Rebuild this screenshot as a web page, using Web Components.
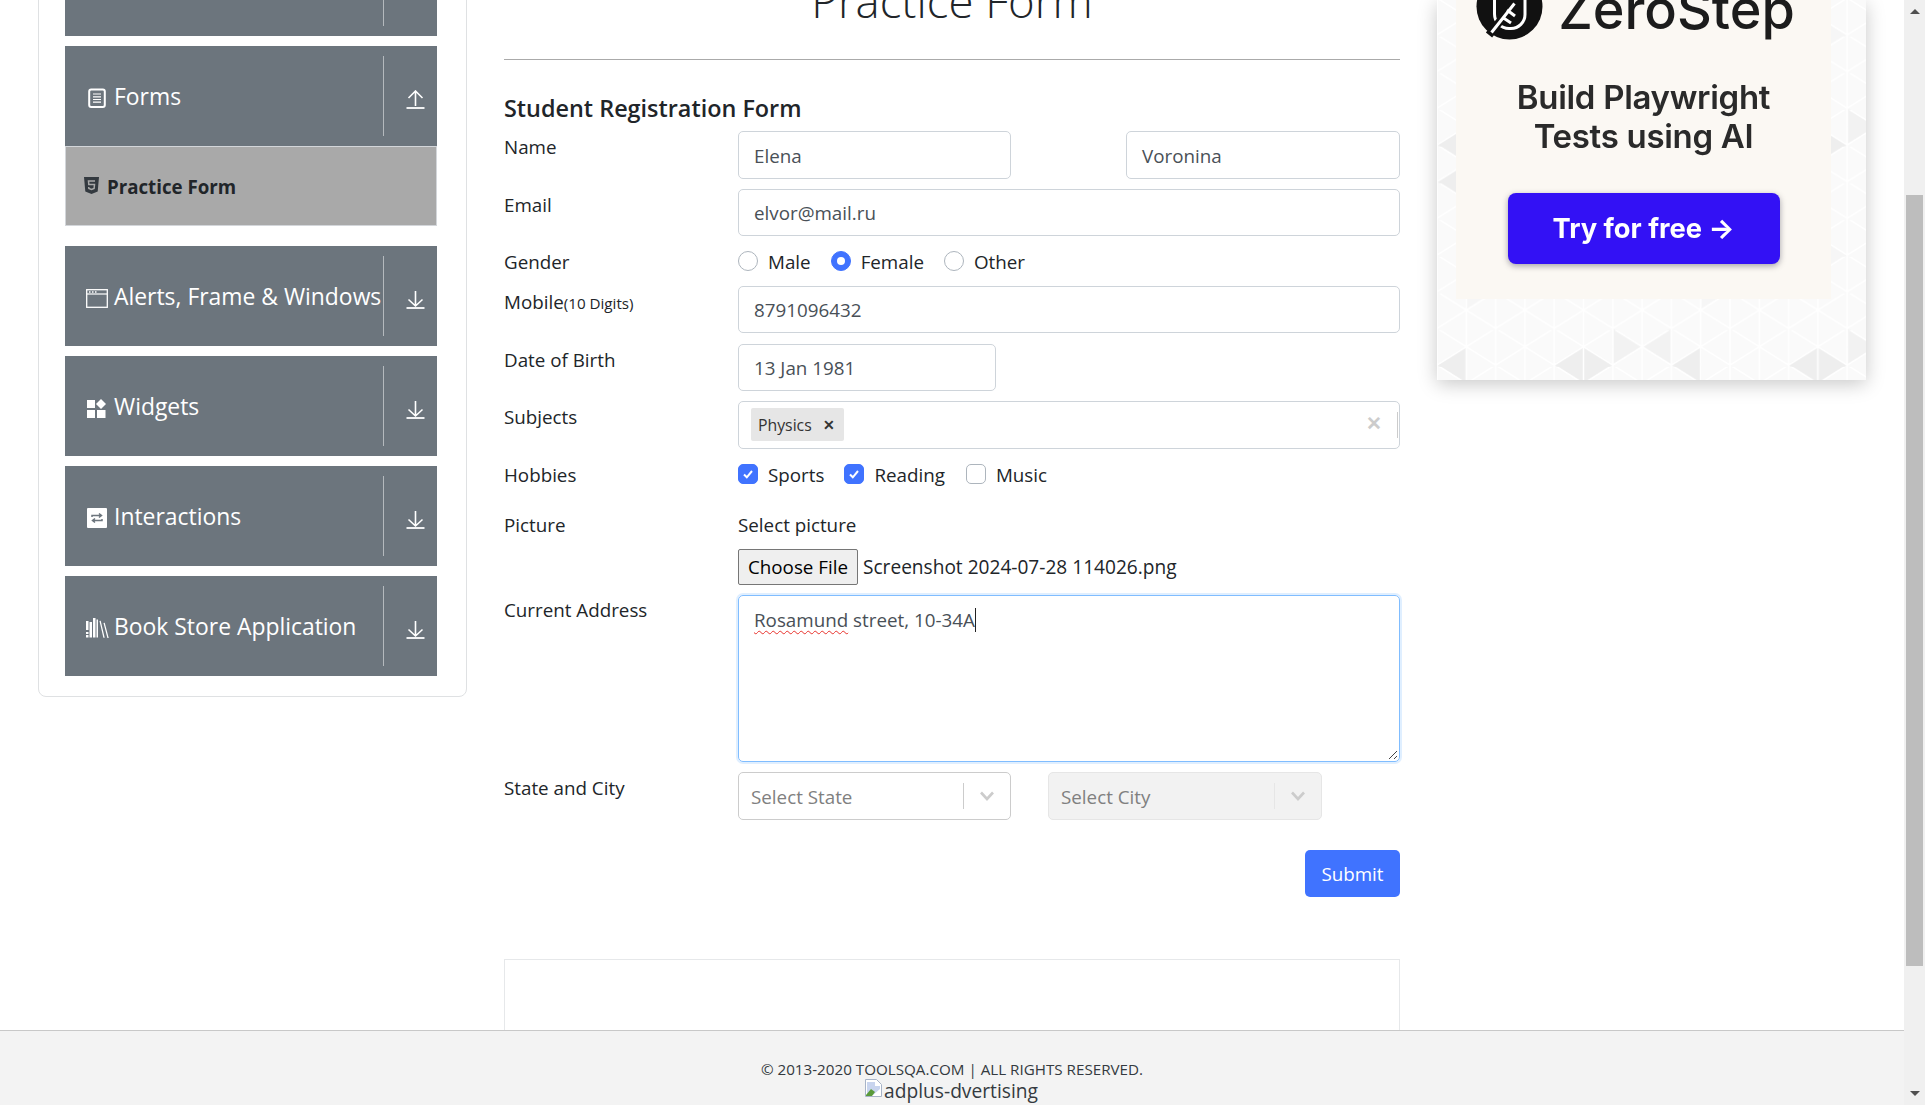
<!DOCTYPE html>
<html>
<head>
<meta charset="utf-8">
<title>Practice Form</title>
<style>
html, body { margin: 0; padding: 0; height: 1105px; overflow: hidden; background: #fff; }
body { font-family: "Open Sans", "Liberation Sans", sans-serif; font-size: 18.8px; color: #212529; }
</style>
</head>
<body>
<practice-page>
    <side-menu slot="side">
        <menu-group icon="none"></menu-group>
        <menu-group icon="forms" open>Forms</menu-group>
        <menu-entry>Practice Form</menu-entry>
        <menu-group icon="window" style="margin-top:20px">Alerts, Frame &amp; Windows</menu-group>
        <menu-group icon="widgets">Widgets</menu-group>
        <menu-group icon="swap">Interactions</menu-group>
        <menu-group icon="books">Book Store Application</menu-group>
    </side-menu>
    <practice-form slot="main"></practice-form>
    <ad-banner slot="ad"></ad-banner>
    <site-footer slot="footer"></site-footer>
    <page-scrollbar slot="bar"></page-scrollbar>
</practice-page>

<script>
const ICONS = {
    none: ``,
    forms: `<svg width="18" height="20" viewBox="0 0 18 20" fill="none" stroke="#fff"><rect x="1.2" y="1.5" width="15.6" height="17.5" rx="2" stroke-width="2"/><path d="M5 6h8M5 8.8h8M5 11.5h8M5 14.2h8" stroke-width="1.2"/></svg>`,
    window: `<svg width="22" height="19" viewBox="0 0 22 19" fill="none" stroke="#fff"><rect x=".7" y=".7" width="20.6" height="17.6" stroke-width="1.3"/><path d="M1 5h20" stroke-width="1.2"/><path d="M3 3h1.5M6 3h1.5M9 3h1.5" stroke-width="1.4"/></svg>`,
    widgets: `<svg width="20" height="19" viewBox="0 0 20 19" fill="#fff"><rect x="0" y="1" width="8" height="8"/><rect x="0" y="11" width="8" height="8"/><rect x="10" y="11" width="8.5" height="8"/><path d="M14 0l5 5-5 5-5-5z"/></svg>`,
    swap: `<svg width="20" height="20" viewBox="0 0 20 20"><rect width="20" height="20" rx="1" fill="#fff"/><path d="M5 9V7.5h9M12 5.5l2.5 2-2.500 2M15 11v1.500H6M8 10.500l-2.500 2 2.500 2" fill="none" stroke="#6c757d" stroke-width="1.5"/></svg>`,
    books: `<svg width="23" height="20" viewBox="0 0 23 20" fill="#fff"><path d="M0 3h2.500v9H0zM0 14h2.500v2H0zM0 17h2.500v2.500H0zM3.500 4H6v15.500H3.500zM7 0h2.500v19.500H7zM10.500 1.500h1.500v18h-1.500z"/><path d="M13.500 3l1.200-.3 4 17h-1.300zM17.500 5l1.200-.3 4 15.300h-1.300z"/></svg>`
};

class MenuGroup extends HTMLElement {
    constructor() {
        super();
        this.shadowDOM = this.attachShadow({mode: "open"});
    }
    connectedCallback() {
        const up = this.hasAttribute("open");
        this.shadowDOM.innerHTML = `
        <style>
        :host { display: flex; height: 100px; margin-bottom: 10px; background: #6c757d; color: #fff; box-sizing: border-box; padding-left: 20px; align-items: center; font-size: 22.9px; flex: none; }
        .icon { width: 24px; height: 24px; margin-top: 4px; margin-right: 5px; display: flex; align-items: center; justify-content: center; flex: none; }
        .title { flex: 1; white-space: nowrap; min-width: 0; }
        .arrow { width: 54px; height: 80px; border-left: 1px solid #b4b9bd; box-sizing: border-box; padding-left: 22px; display: flex; align-items: center; flex: none; }
        .arrow svg { margin-top: 7px; }
        </style>
        <span class="icon">${ICONS[this.getAttribute("icon")]}</span>
        <span class="title"><slot></slot></span>
        <span class="arrow">
            <svg width="19" height="19" viewBox="0 0 19 19" fill="none" stroke="#fff" stroke-width="1.6">
            ${up ? `<path d="M9.500 16V1.500M2.500 8l7-7 7 7"/>` : `<path d="M9.500 1v15M2.500 9.500l7 6.500 7-6.500"/>`}
            <path d="M.5 18h18" stroke-width="1.800"/></svg>
        </span>`;
    }
}

class MenuEntry extends HTMLElement {
    constructor() {
        super();
        this.shadowDOM = this.attachShadow({mode: "open"});
    }
    connectedCallback() {
        this.shadowDOM.innerHTML = `
        <style>
        :host { display: flex; height: 80px; background: #a9a9a9; border: 1px solid #d3d6da; box-sizing: border-box; padding-left: 18px; align-items: center; font-size: 18.7px; font-weight: 700; color: #212529; margin-top: -10px; flex: none; }
        svg { margin-right: 8px; margin-top: -2px; }
        </style>
        <svg width="15" height="17" viewBox="0 0 15 17"><path fill="#343a40" d="M0 0h15l-1.300 14.500L7.500 17l-6.200-2.500z"/><path fill="none" stroke="#a9a9a9" stroke-width="1.500" d="M11 4H4.500l.3 3.500H10.500l-.4 4-2.600 1-2.600-1-.2-1.500"/></svg>
        <slot></slot>`;
    }
}

class SideMenu extends HTMLElement {
    constructor() {
        super();
        this.shadowDOM = this.attachShadow({mode: "open"});
    }
    connectedCallback() {
        this.shadowDOM.innerHTML = `
        <style>
        :host { display: flex; flex-direction: column; width: 429px; height: 797px; margin-top: -100px; box-sizing: border-box; border: 1px solid #dfe1e3; border-radius: 8px; padding: 35px 29px 0 26px; flex: none; }
        </style>
        <slot></slot>`;
    }
}

class TextField extends HTMLElement {
    constructor() {
        super();
        this.shadowDOM = this.attachShadow({mode: "open"});
    }
    connectedCallback() {
        this.shadowDOM.innerHTML = `
        <style>
        :host { display: flex; align-items: center; box-sizing: border-box; height: 100%; border: 1px solid #ced4da; border-radius: 5px; padding: 1px 15px 0; color: #495057; background: #fff; white-space: nowrap; }
        </style>
        <slot></slot>`;
    }
}

class ChoiceBox extends HTMLElement {
    constructor() {
        super();
        this.shadowDOM = this.attachShadow({mode: "open"});
    }
    connectedCallback() {
        const radio = this.getAttribute("type") == "radio";
        const on = this.hasAttribute("checked");
        const mark = !on ? "" : radio
            ? `<span class="dot"></span>`
            : `<svg width="12" height="12" viewBox="0 0 12 12" fill="none" stroke="#fff" stroke-width="2"><path d="M2 6.500l2.800 2.800L10 3"/></svg>`;
        this.shadowDOM.innerHTML = `
        <style>
        :host { display: flex; align-items: center; height: 20px; color: #212529; white-space: nowrap; }
        .box { width: 20px; height: 20px; box-sizing: border-box; border: 1px solid ${on ? "#4073ff" : "#adb5bd"}; background: ${on ? "#4073ff" : "#fff"}; border-radius: ${radio ? "50%" : "5px"}; display: flex; align-items: center; justify-content: center; margin-right: 10px; }
        .dot { width: 8px; height: 8px; border-radius: 50%; background: #fff; }
        .text { padding-top: 1px; }
        </style>
        <span class="box">${mark}</span><span class="text"><slot></slot></span>`;
    }
}

class SelectBox extends HTMLElement {
    constructor() {
        super();
        this.shadowDOM = this.attachShadow({mode: "open"});
    }
    connectedCallback() {
        const off = this.hasAttribute("disabled");
        this.shadowDOM.innerHTML = `
        <style>
        :host { display: flex; align-items: center; box-sizing: border-box; width: 273px; height: 100%; border: 1px solid ${off ? "#e6e6e6" : "#ccc"}; border-radius: 5px; background: ${off ? "#f2f2f2" : "#fff"}; color: #808080; padding-left: 12px; }
        .label { flex: 1; white-space: nowrap; padding-top: 1px; }
        .sep { width: 1px; height: 26px; background: ${off ? "#e6e6e6" : "#ccc"}; }
        .chev { width: 46px; display: flex; justify-content: center; }
        </style>
        <span class="label"><slot></slot></span><span class="sep"></span>
        <span class="chev"><svg width="16" height="12" viewBox="0 0 16 12" fill="none" stroke="#ccc" stroke-width="2.600"><path d="M2 2.500l6 6.500 6-6.500"/></svg></span>`;
    }
}

class FormRow extends HTMLElement {
    constructor() {
        super();
        this.shadowDOM = this.attachShadow({mode: "open"});
    }
    connectedCallback() {
        this.shadowDOM.innerHTML = `
        <style>
        :host { display: flex; flex: none; color: #212529; }
        .label { width: 234px; flex: none; padding-top: var(--lt, 4px); line-height: 24px; white-space: nowrap; box-sizing: border-box; padding-left: 1px; margin-left: -1px; }
        .control { flex: 1; min-width: 0; height: 100%; display: flex; gap: var(--cg, 0); justify-content: var(--cj, flex-start); margin-left: 1px; }
        ::slotted([slot=label]) { font-size: 15.200px; }
        </style>
        <div class="label"><slot name="title"></slot><slot name="label"></slot></div>
        <div class="control"><slot></slot></div>`;
    }
}

class PracticeForm extends HTMLElement {
    constructor() {
        super();
        this.shadowDOM = this.attachShadow({mode: "open"});
    }
    connectedCallback() {
        this.shadowDOM.innerHTML = `
        <style>
        :host { display: flex; flex-direction: column; width: 896px; margin-left: 37px; flex: none; height: 1200px; }
        h1 { margin: -40px 0 0; height: 100px; box-sizing: border-box; line-height: 80px; text-align: center; font-weight: 300; font-size: 45.500px; color: #212529; border-bottom: 1px solid #aaa; flex: none; }
        h5 { margin: 33px 0 0; height: 38px; line-height: 30px; font-size: 23.400px; font-weight: 600; flex: none; }
        .chip { display: inline-flex; align-items: center; height: 33px; width: 93px; box-sizing: border-box; background: #e6e6e6; border-radius: 2px; padding-left: 7px; font-size: 15.800px; color: #333; margin: 5px 0 0 -3px; white-space: nowrap; }
        .chip b { margin-left: 11px; font-size: 14px; font-weight: 700; }
        .clear { margin-left: auto; margin-right: 15px; color: #ccc; font-size: 19px; font-weight: 600; line-height: 1; }
        .tick { width: 1px; height: 26px; background: #ccc; }
        .file { display: flex; flex-direction: column; height: 100%; }
        .file .cap { height: 36px; line-height: 24px; }
        .file .pick { display: flex; align-items: center; white-space: nowrap; font-size: 19.100px; }
        .choose { width: 120px; height: 36px; box-sizing: border-box; border: 1px solid #767676; border-radius: 2px; background: #efefef; color: #000; display: flex; align-items: center; justify-content: center; margin-right: 5px; font-size: 18.800px; }
        .address { position: relative; height: 100%; box-sizing: border-box; border: 1px solid #80bdff; border-radius: 5px; box-shadow: 0 0 0 2px rgba(0,123,255,.12); padding: 12px 15px; color: #495057; line-height: 24px; }
        .address u { text-decoration: underline wavy #e8322c 1px; text-underline-offset: 3px; }
        .caret { display: inline-block; width: 1px; height: 24px; background: #222; vertical-align: -5px; }
        .grip { position: absolute; right: 1px; bottom: 1px; }
        .submit { width: 95px; height: 47px; border-radius: 5px; background: #4073ff; color: #fff; display: flex; align-items: center; justify-content: center; }
        .blank { height: 200px; margin-top: 62px; border: 1px solid #e6e8ea; flex: none; }
        </style>
        <h1>Practice Form</h1>
        <h5>Student Registration Form</h5>
        <form-row style="height:48px;--cj:space-between">
            <span slot="title">Name</span>
            <text-field style="width:273px">Elena</text-field>
            <text-field style="width:274px">Voronina</text-field>
        </form-row>
        <form-row style="height:47px;margin-top:10px;--lt:4px">
            <span slot="title">Email</span>
            <text-field style="width:100%">elvor@mail.ru</text-field>
        </form-row>
        <form-row style="height:20px;margin-top:15px;--lt:0;--cg:20px">
            <span slot="title" style="position:relative;top:-1px">Gender</span>
            <choice-box type="radio">Male</choice-box>
            <choice-box type="radio" checked>Female</choice-box>
            <choice-box type="radio">Other</choice-box>
        </form-row>
        <form-row style="height:47px;margin-top:15px;--lt:4px">
            <span slot="title">Mobile</span><span slot="label">(10 Digits)</span>
            <text-field style="width:100%">8791096432</text-field>
        </form-row>
        <form-row style="height:47px;margin-top:11px;--lt:4px">
            <span slot="title">Date of Birth</span>
            <text-field style="width:258px">13 Jan 1981</text-field>
        </form-row>
        <form-row style="height:48px;margin-top:10px;--lt:4px">
            <span slot="title">Subjects</span>
            <text-field style="width:100%;align-items:flex-start;padding-right:1px">
                <span class="chip">Physics<b>✕</b></span>
                <span class="clear" style="margin-top:11px">✕</span>
                <span class="tick" style="margin-top:9px"></span>
            </text-field>
        </form-row>
        <form-row style="height:20px;margin-top:15px;--lt:0;--cg:20px">
            <span slot="title" style="position:relative;top:-1px">Hobbies</span>
            <choice-box checked>Sports</choice-box>
            <choice-box checked>Reading</choice-box>
            <choice-box style="margin-left:1px">Music</choice-box>
        </form-row>
        <form-row style="height:72px;margin-top:29px;--lt:0">
            <span slot="title">Picture</span>
            <div class="file">
                <div class="cap">Select picture</div>
                <div class="pick"><span class="choose">Choose File</span>Screenshot 2024-07-28 114026.png</div>
            </div>
        </form-row>
        <form-row style="height:167px;margin-top:10px;--lt:3px">
            <span slot="title">Current Address</span>
            <div class="address" style="width:100%"><u>Rosamund</u> street, 10-34A<span class="caret"></span>
                <svg class="grip" width="10" height="10" viewBox="0 0 10 10" stroke="#444" stroke-width="1" fill="none"><path d="M1 9l8-8M6 9l3-3"/></svg>
            </div>
        </form-row>
        <form-row style="height:48px;margin-top:10px;--cg:37px;--lt:4px">
            <span slot="title">State and City</span>
            <select-box>Select State</select-box>
            <select-box disabled style="width:274px">Select City</select-box>
        </form-row>
        <form-row style="height:47px;margin-top:30px;--cj:flex-end">
            <div class="submit">Submit</div>
        </form-row>
        <div class="blank"></div>`;
    }
}

class AdBanner extends HTMLElement {
    constructor() {
        super();
        this.shadowDOM = this.attachShadow({mode: "open"});
    }
    connectedCallback() {
        this.shadowDOM.innerHTML = `
        <style>
        :host { display: block; position: relative; width: 429px; height: 380px; margin-left: 37px; flex: none; background: #fafafa; box-shadow: 0 4px 18px rgba(0,0,0,.22); font-family: Inter, "Liberation Sans", sans-serif; }
        .pattern { position: absolute; left: 0; top: 0; filter: blur(.5px); }
        .inner { position: relative; margin-left: 19px; width: 375px; height: 299px; background: #fbf8f3; display: flex; flex-direction: column; align-items: center; overflow: hidden; filter: blur(.5px); }
        .logo { display: flex; align-items: center; margin-top: -27px; height: 67px; gap: 15px; color: #1c1c1c; font-size: 54px; font-weight: 500; margin-left: -16px; flex: none; }
        .logo span { position: relative; top: 3px; }
        .copy { margin-top: 38px; text-align: center; font-size: 33px; line-height: 39px; font-weight: 600; color: #2a2a2a; letter-spacing: -.3px; }
        .cta { margin-top: 37px; width: 272px; height: 71px; border-radius: 8px; background: #3311f5; color: #fff; font-weight: 700; font-size: 27.300px; display: flex; align-items: center; justify-content: center; box-shadow: 0 2px 6px rgba(0,0,30,.35); }
        </style>
        <svg class="pattern" width="429" height="380">
            <defs>
                <pattern id="lines" width="58.6" height="36.7" patternUnits="userSpaceOnUse">
                    <path d="M0 -2v40M29.300 -2v40M58.600 -2v40M0 -1.950L29.300 16.400L58.600 -1.950M0 34.750L29.300 16.400L58.600 34.750" stroke="#fff" stroke-width="1.500" fill="none"/>
                </pattern>
                <pattern id="shade" width="234.4" height="220.2" patternUnits="userSpaceOnUse">
                    <path fill="#eeeeee" d="M0 144.800L29.300 126.500V163.200zM0 181.500L29.300 163.200V199.900zM117.200 144.800L146.500 126.500V163.200zM175.800 144.800L146.500 126.500V163.200z"/>
                    <path fill="#f2f2f2" d="M175.800 108.100V144.800L205.100 126.500zM205.100 126.500L234.400 108.100V144.800z"/>
                    <path fill="#f6f6f6" d="M58.600 34.750V71.450L87.900 53.100zM146.500 16.400L175.800 34.750 146.500 53.100zM29.300 53.100L58.600 71.450 29.300 89.800z"/>
                </pattern>
            </defs>
            <rect width="429" height="380" fill="url(#shade)"/>
            <rect width="429" height="380" fill="url(#lines)"/>
        </svg>
        <div class="inner">
            <div class="logo">
                <svg width="67" height="67" viewBox="0 0 67 67">
                    <circle cx="33.500" cy="33.500" r="33" fill="#111"/>
                    <path d="M18.500 20V41a14.500 14.500 0 0 0 14.500 14.500h2a14 14 0 0 0 14-14V20" fill="none" stroke="#fff" stroke-width="3"/>
                    <path d="M13 62L40 28" stroke="#111" stroke-width="8"/>
                    <path d="M15.500 59.500L38.500 30.500M26 44l9 6M31 37l8 6" stroke="#fff" stroke-width="3"/>
                </svg>
                <span>ZeroStep</span>
            </div>
            <div class="copy">Build Playwright<br>Tests using AI</div>
            <div class="cta">Try for free →</div>
        </div>`;
    }
}

class SiteFooter extends HTMLElement {
    constructor() {
        super();
        this.shadowDOM = this.attachShadow({mode: "open"});
    }
    connectedCallback() {
        this.shadowDOM.innerHTML = `
        <style>
        :host { display: block; height: 75px; box-sizing: border-box; border-top: 1px solid #c8c8c8; background: #f3f3f3; text-align: center; padding-top: 27px; color: #343a40; overflow: hidden; flex: none; }
        .copy { font-size: 15.200px; line-height: 22px; height: 21px; }
        .alt { display: flex; justify-content: center; align-items: center; height: 22px; font-size: 19.200px; color: #343a40; }
        svg { margin-top: -4px; margin-left: -2px; }
        </style>
        <div class="copy">© 2013-2020 TOOLSQA.COM | ALL RIGHTS RESERVED.</div>
        <div class="alt">
            <svg width="20" height="20" viewBox="0 0 20 20"><path d="M1.500 1.500h11l5 5v12h-16z" fill="#fff" stroke="#a8b4c8"/><path d="M3 4h8v4h5v3l-7 6H3z" fill="#c8d4ee"/><path d="M2 17l5-6 4 3-3 4H2z" fill="#5a9a3a"/></svg>
            <span>adplus-dvertising</span>
        </div>`;
    }
}

class PageScrollbar extends HTMLElement {
    constructor() {
        super();
        this.shadowDOM = this.attachShadow({mode: "open"});
    }
    connectedCallback() {
        this.shadowDOM.innerHTML = `
        <style>
        :host { display: flex; flex-direction: column; align-items: center; width: 21px; height: 1105px; background: #f0f0f0; flex: none; box-sizing: border-box; padding-top: 9px; }
        .thumb { width: 17px; height: 771px; margin-top: 181px; background: #bdbdbd; flex: none; }
        .down { margin-top: 125px; }
        </style>
        <svg width="10" height="5" viewBox="0 0 10 5" style="flex:none"><path d="M5 0l5 5H0z" fill="#505050"/></svg>
        <div class="thumb"></div>
        <svg class="down" width="10" height="5" viewBox="0 0 10 5" style="flex:none"><path d="M5 5L0 0h10z" fill="#505050"/></svg>`;
    }
}

class PracticePage extends HTMLElement {
    constructor() {
        super();
        this.shadowDOM = this.attachShadow({mode: "open"});
    }
    connectedCallback() {
        this.shadowDOM.innerHTML = `
        <style>
        :host { display: flex; width: 1925px; height: 1105px; overflow: hidden; }
        .left { flex: 1; min-width: 0; display: flex; flex-direction: column; }
        .top { height: 1030px; padding-left: 38px; display: flex; overflow: hidden; flex: none; box-sizing: border-box; }
        </style>
        <div class="left">
            <div class="top">
                <slot name="side"></slot>
                <slot name="main"></slot>
                <slot name="ad"></slot>
            </div>
            <slot name="footer"></slot>
        </div>
        <slot name="bar"></slot>`;
    }
}

customElements.define("menu-group", MenuGroup);
customElements.define("menu-entry", MenuEntry);
customElements.define("side-menu", SideMenu);
customElements.define("text-field", TextField);
customElements.define("choice-box", ChoiceBox);
customElements.define("select-box", SelectBox);
customElements.define("form-row", FormRow);
customElements.define("practice-form", PracticeForm);
customElements.define("ad-banner", AdBanner);
customElements.define("site-footer", SiteFooter);
customElements.define("page-scrollbar", PageScrollbar);
customElements.define("practice-page", PracticePage);
</script>
</body>
</html>
